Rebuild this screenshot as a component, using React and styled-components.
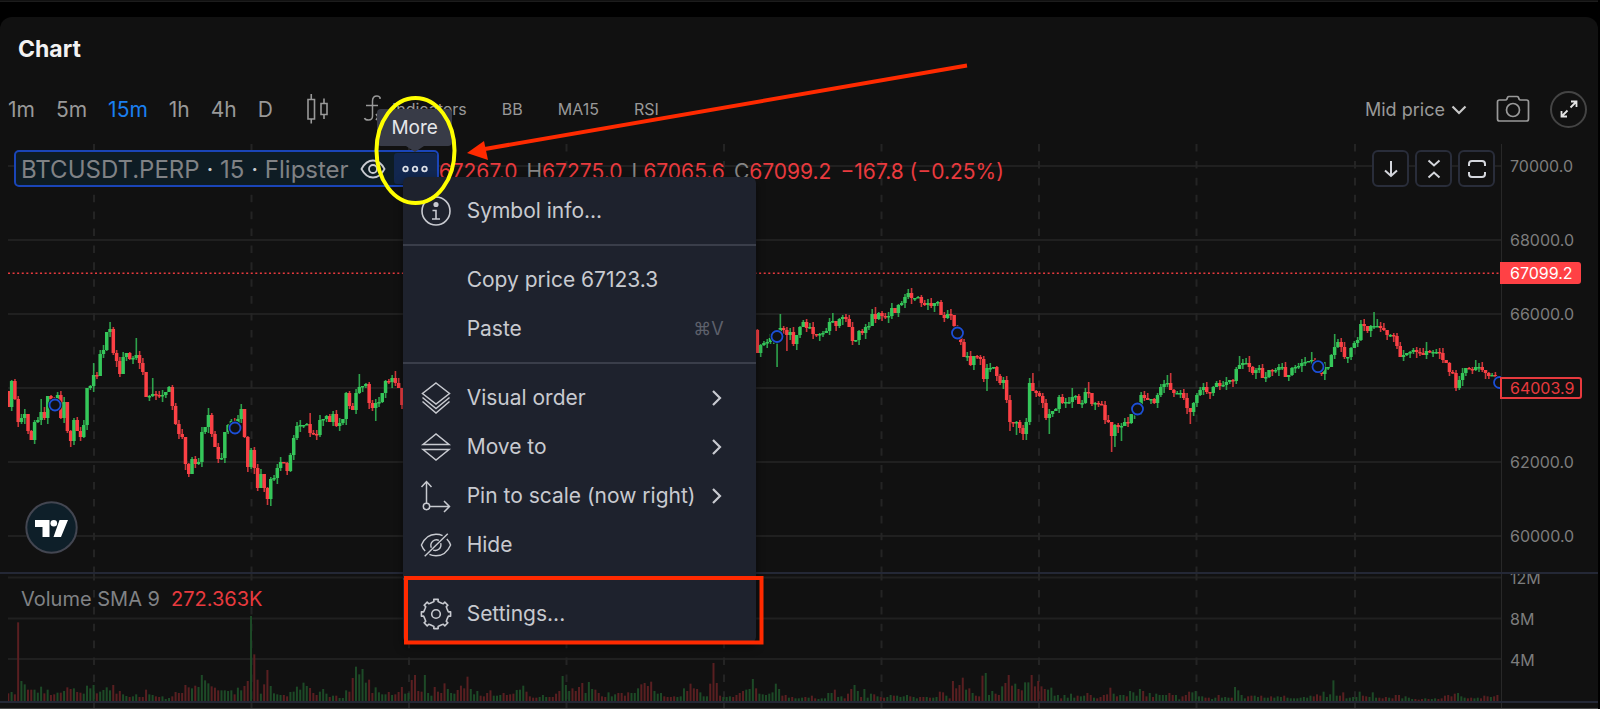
import React from "react";
import styled, { createGlobalStyle, css } from "styled-components";

const GlobalStyle = createGlobalStyle`
  * { box-sizing: border-box; }
  body {
    margin: 0;
    background: #000;
    color: #9a9a9a;
    font-family: Inter, "Liberation Sans", sans-serif;
    overflow-x: hidden;
  }
  button, select { font: inherit; color: inherit; background: none; border: 0; padding: 0; margin: 0; }
`;

const Page = styled.div`
  position: relative;
  display: flex;
  flex-direction: column;
  gap: 15px;
  padding-right: 2px;
`;

const PreviousCard = styled.div`
  height: 2px;
  background: #111;
  border-bottom: 1px solid #1c1c1c;
`;

const Card = styled.section`
  background: #111;
  border-radius: 12px 12px 0 0;
  border-bottom: 1px solid #4a4a4a;
`;

const Title = styled.h2`
  margin: 0;
  padding: 16px 18px 0;
  font-size: 23px;
  line-height: 32px;
  font-weight: 700;
  color: #f2f2f2;
`;

const Toolbar = styled.div`
  display: flex;
  align-items: center;
  justify-content: space-between;
  height: 38px;
  margin-top: 25px;
  padding: 0 11px 0 8px;
`;

const ToolGroup = styled.div`
  display: flex;
  align-items: center;
  gap: ${(p) => p.$gap}px;
`;

const IntervalButton = styled.button`
  padding-top: 2px;
  font-size: 21px;
  line-height: 24px;
  color: ${(p) => (p.$active ? "#1a7ff0" : "#999")};
`;

const IndicatorButton = styled.button`
  display: flex;
  align-items: center;
  gap: 10px;
  font-size: 16px;
  line-height: 24px;
  color: #999;
`;

const IconButton = styled.button`
  display: flex;
  align-items: center;
  justify-content: center;
  color: #999;
`;

const RoundButton = styled(IconButton)`
  width: 37px;
  height: 37px;
  border: 2px solid #444;
  border-radius: 50%;
  color: #e4e4e4;
`;

const PriceSource = styled.label`
  display: flex;
  align-items: center;
  gap: 6px;
  padding-top: 2px;
  font-size: 18px;
  line-height: 24px;
  color: #999;
  select { appearance: none; outline: none; }
  svg { color: #c8c8c8; }
`;

const ChartArea = styled.div`
  position: relative;
  margin-top: 16px;
`;

const Pane = styled.div`
  display: grid;
  grid-template-columns: minmax(0, 1fr) 97px;
  height: ${(p) => p.$height}px;
  padding-left: 8px;
  overflow: hidden;
  border-bottom: ${(p) => (p.$last ? 0 : 2)}px solid #242836;
`;

const Plot = styled.svg`
  display: block;
  width: 100%;
  height: 100%;
`;

const Axis = styled.div`
  position: relative;
  display: flex;
  flex-direction: column;
  align-items: flex-start;
  gap: ${(p) => p.$gap}px;
  padding-top: ${(p) => p.$top}px;
  border-left: 1px solid #282828;
  font-size: 16px;
  line-height: 24px;
  color: #7d7d7d;
`;

const VolumeScale = styled.div`
  display: flex;
  flex-direction: column;
  gap: 17px;
  margin-top: -8px;
`;

const AxisLabel = styled.span`
  padding-left: 8px;
  height: 24px;
`;

const tag = css`
  height: 22px;
  line-height: 18px;
  padding: 0 6px 0 8px;
  border: 2px solid #e83a3e;
  border-radius: 0 3px 3px 0;
  margin-left: -2px;
`;

const EntryTag = styled.span`
  ${tag}
  margin-top: 1px;
  margin-bottom: 1px;
  color: #e83a3e;
`;

const LastPriceTag = styled.span`
  ${tag}
  position: absolute;
  left: 0;
  top: 118px;
  background: #ff4145;
  border-color: #ff4145;
  color: #fff;
`;

const Legend = styled.div`
  position: absolute;
  left: 14px;
  top: 6px;
  display: flex;
  align-items: center;
`;

const SymbolBox = styled.div`
  display: flex;
  align-items: center;
  height: 37px;
  padding-left: 5px;
  border: 2px solid #1a45b8;
  border-radius: 5px;
  background: #0e1c24;
`;

const SymbolName = styled.span`
  padding-top: 2px;
  font-size: 24px;
  line-height: 32px;
  color: #808285;
  b { font-weight: 400; color: #c8ccd0; }
`;

const EyeButton = styled(IconButton)`
  width: 36px;
  margin-left: 6px;
  color: #c8cad0;
`;

const MoreAnchor = styled.div`
  position: relative;
  margin-left: 3px;
`;

const MoreButton = styled(IconButton)`
  width: 43px;
  height: 31px;
  border-radius: 3px;
  background: #12274f;
  color: #dcdfe6;
`;

const Tooltip = styled.div`
  position: absolute;
  z-index: 2;
  left: 50%;
  bottom: 38px;
  width: 75px;
  height: 37px;
  margin-left: -38px;
  border-radius: 4px;
  background: #383b47;
  color: #e6e7ea;
  font-size: 19px;
  line-height: 38px;
  text-align: center;
  &::after {
    content: "";
    position: absolute;
    left: 29px;
    top: 37px;
    border: 9px solid transparent;
    border-top: 6px solid #383b47;
    border-bottom: 0;
  }
`;

const Menu = styled.div`
  position: absolute;
  z-index: 1;
  left: 9px;
  top: 24px;
  width: 353px;
  padding: 9px 0 5px;
  border-radius: 6px;
  background: #1e222d;
  box-shadow: 0 4px 8px rgba(0, 0, 0, 0.5);
  color: #c8cad0;
`;

const MenuItem = styled.button`
  display: grid;
  grid-template-columns: 32px 1fr auto;
  align-items: center;
  column-gap: 15px;
  width: 100%;
  height: 49px;
  padding: 0 32px 0 17px;
  font-size: 21px;
  line-height: 28px;
  text-align: left;
  white-space: nowrap;
`;

const MenuIcon = styled.span`
  display: flex;
  justify-content: center;
`;

const Shortcut = styled.kbd`
  font: 18px/24px Inter, "DejaVu Sans", sans-serif;
  color: #5d606b;
`;

const MenuRule = styled.hr`
  height: 2px;
  margin: 9px 0;
  border: 0;
  background: #3a3e4a;
`;

const Ohlc = styled.div`
  display: flex;
  gap: 9px;
  padding-top: 6px;
  font-size: 21px;
  line-height: 24px;
  color: #e83a3e;
  white-space: nowrap;
  i { font-style: normal; color: #858585; }
`;

const PaneActions = styled.div`
  position: absolute;
  right: 103px;
  top: 6px;
  display: flex;
  gap: 6px;
`;

const PaneButton = styled(IconButton)`
  width: 37px;
  height: 37px;
  border: 2px solid #292d3a;
  border-radius: 6px;
  background: #111;
  color: #d4d6dc;
`;

const VolumeLegend = styled.div`
  position: absolute;
  left: 21px;
  top: 441px;
  display: flex;
  gap: 11px;
  font-size: 20px;
  line-height: 28px;
  color: #808285;
  strong { font-weight: 400; color: #e83a3e; }
`;

const LogoLink = styled.a`
  position: absolute;
  left: 25px;
  top: 357px;
  width: 53px;
  height: 53px;
`;

const Annotations = styled.svg`
  position: absolute;
  z-index: 5;
  left: 0;
  top: 0;
  pointer-events: none;
`;

const Stroke = ({ w, h, box, sw = 1, children }) => (
  <svg width={w} height={h} viewBox={box || `0 0 ${w} ${h}`} fill="none" stroke="currentColor" strokeWidth={sw} aria-hidden="true">
    {children}
  </svg>
);

const CandlesIcon = () => (
  <Stroke w={24} h={32} sw={1.6}>
    <path d="M2 6.500h6.500v19.500H2zM5.250 1v5.500M5.250 26v4.500M15 10.500h6v11h-6zM18 5.500v5M18 21.500v4.500" />
  </Stroke>
);
const FxIcon = () => (
  <Stroke w={19} h={30} sw={1.5}>
    <path d="M17 5V3.500Q16 2 14 2Q9.500 2 9.500 7V22Q9.500 26 5.500 26Q2 26 1.500 24M3 11.500H15M13 20l4 6M17 20l-4 6" />
  </Stroke>
);
const ChevronDown = () => (
  <Stroke w={16} h={10} sw={2.2}><path d="M1.500 1.500L8 8L14.500 1.500" /></Stroke>
);
const CameraIcon = () => (
  <Stroke w={34} h={28} sw={1.7}>
    <path d="M3.500 5H9.500Q10.500 5 11 4L11.500 2.500Q12 1.500 13 1.500H21Q22 1.500 22.500 2.500L23 4Q23.500 5 24.500 5H30.500Q32.500 5 32.500 7V24Q32.500 26 30.500 26H3.500Q1.500 26 1.500 24V7Q1.500 5 3.500 5Z" />
    <circle cx="17" cy="15" r="6.500" />
  </Stroke>
);
const ExpandIcon = () => (
  <Stroke w={18} h={18} sw={1.8}>
    <path d="M10.500 7.500L16.500 1.500M11 1.500H16.500V7M7.500 10.500L1.500 16.500M1.500 11V16.500H7" />
  </Stroke>
);
const EyeIcon = () => (
  <Stroke w={26} h={20} sw={1.8}>
    <path d="M1.500 10Q6 1.500 13 1.500T24.500 10Q20 18.500 13 18.500T1.500 10Z" />
    <circle cx="13" cy="10" r="4" />
  </Stroke>
);
const DotsIcon = () => (
  <Stroke w={26} h={8} sw={1.8}>
    <circle cx="3.500" cy="4" r="2.300" /><circle cx="13" cy="4" r="2.300" /><circle cx="22.500" cy="4" r="2.300" />
  </Stroke>
);
const InfoIcon = () => (
  <Stroke w={32} h={32} sw={1.6}>
    <circle cx="16" cy="16" r="14" />
    <circle cx="16" cy="9.500" r="1.800" fill="currentColor" />
    <path d="M12.500 15.500H16V24M12 24H20" />
  </Stroke>
);
const LayersIcon = () => (
  <Stroke w={32} h={34} sw={1.5}>
    <path d="M16 2L29.500 12.500L16 23L2.500 12.500ZM2.500 16.500L16 27.500L29.500 16.500M2.500 20.500L16 32L29.500 20.500" />
  </Stroke>
);
const MoveIcon = () => (
  <Stroke w={32} h={32} sw={1.5}>
    <path d="M3 13.500L16 3L29 13.500ZM3 18.500L16 29L29 18.500Z" />
  </Stroke>
);
const PinIcon = () => (
  <Stroke w={32} h={34} sw={1.5}>
    <path d="M6.500 24V2.500M1.500 8L6.500 2.500L11.500 8M10 27.500H29M24 22L29.500 27.500L24 33" />
    <circle cx="6.500" cy="27.500" r="3.200" />
  </Stroke>
);
const HideIcon = () => (
  <Stroke w={34} h={28} sw={1.5}>
    <path d="M5.500 20.500Q3 18 1.500 14Q6.500 2.500 17 2.500Q21 2.500 24 4M28.500 7.500Q31.500 10.500 32.500 14Q27.500 25.500 17 25.500Q13 25.500 10 24M12 17Q10.500 12.500 13.500 10Q16.500 7.500 20 9M22 12Q23 16 20 18.500Q17.500 20.500 14 19.500M29.500 2L5 26" />
  </Stroke>
);
const gearPath = (() => {
  const pts = [];
  for (let k = 0; k < 8; k++) {
    const base = (k * Math.PI) / 4;
    [[-0.3, 12.2], [-0.17, 12.6], [-0.15, 14.8], [0.15, 14.8], [0.17, 12.6], [0.3, 12.2]].forEach(([a, r]) =>
      pts.push(`${(16 + r * Math.sin(base + a)).toFixed(1)} ${(16 - r * Math.cos(base + a)).toFixed(1)}`));
  }
  return `M${pts.join("L")}Z`;
})();
const GearIcon = () => (
  <Stroke w={32} h={32} sw={1.6}>
    <path d={gearPath} strokeLinejoin="round" /><circle cx="16" cy="16" r="4.300" />
  </Stroke>
);
const ChevronRight = () => (
  <Stroke w={14} h={18} sw={2.2}><path d="M3 2L10 9L3 16" /></Stroke>
);

/* Closing levels of successive candles, in plot units. */
const EARLY = [407,381,399,422,418,414,431,440,422,420,412,418,396,399,400,395,418,402,431,441,420,431,437,425,388,386,375,376,354,350,332,329,353,361,374,357,353,359,358,355,363,372,397,396,394,395,396,395,392,387,406,424,434,437,464,474,459,464,462,432,427,415,434,447,459,458,432,425,421,423,419,409,437,467,450,468,488,474,488,499,479,478,468,462,463,471,455,438,426,425,425,424,433,434,435,420,419,416,422,414,426,423,419,393,406,410,393,387,386,384,403,408,403,402,393,381,382,378,383,388,405];
const LATE = [353,345,343,342,338,337,336,328,330,335,332,344,335,327,322,328,327,334,335,334,333,331,322,321,326,319,317,319,327,341,340,331,333,327,326,314,319,313,316,317,316,308,313,305,303,297,293,298,298,297,303,305,303,306,303,302,315,318,314,315,326,333,342,357,356,365,356,357,359,379,368,368,367,376,383,380,400,422,423,422,428,434,422,383,391,393,396,403,418,414,411,409,397,403,402,402,397,396,404,403,392,393,404,403,404,405,420,422,436,425,427,426,422,423,414,410,409,395,398,400,399,403,395,387,384,383,390,393,393,393,398,408,412,403,395,390,387,392,393,387,383,386,385,382,380,381,369,365,363,363,367,373,370,368,378,377,370,371,370,367,367,377,375,368,367,366,363,362,361,360,364,367,374,367,367,355,347,342,347,357,357,348,343,340,324,326,331,326,326,326,328,330,335,335,336,346,357,355,353,352,350,352,353,355,351,352,352,352,353,360,363,372,373,388,380,373,368,369,370,367,367,370,373,376,375,376];
const EARLY_WICKS = { 26: [363], 31: [322], 39: [338], 44: [378], 55: [, 477], 61: [408], 79: [, 505], 80: [, 506], 107: [374], 112: [, 421], 118: [371], 20: [, 445], 10: [399], 92: [413] };
const LATE_WICKS = { 0: [329], 6: [, 367], 7: [314], 9: [, 351], 23: [313], 36: [307], 46: [289], 70: [, 391], 77: [, 431], 79: [, 435], 81: [, 440], 84: [373], 89: [, 434], 96: [388], 101: [382], 108: [, 452], 109: [, 447], 111: [, 441], 125: [375], 126: [373], 132: [, 424], 133: [, 416], 147: [356], 150: [356], 169: [352], 176: [334], 188: [312], 189: [319], 204: [342], 213: [, 391], 219: [360] };
const STEP = 3.28;

const makeCandles = (closes, wicks, x0, firstOpen) =>
  closes.map((close, i) => {
    const open = i ? closes[i - 1] : firstOpen;
    const [hi, lo] = wicks[i] || [];
    return {
      x: x0 + i * STEP,
      up: close <= open,
      top: Math.min(open, close),
      bottom: Math.max(open, close),
      high: hi || Math.min(open, close) - ((i * 7) % 6),
      low: lo || Math.max(open, close) + ((i * 11) % 7),
    };
  });
const CANDLES = [...makeCandles(EARLY, EARLY_WICKS, 8.3, 391), ...makeCandles(LATE, LATE_WICKS, 757.3, 330)];

/* Volume bar heights, one for each candle step; three units make a pixel. */
const VOLUMES = [23,27,20,236,60,50,34,34,34,25,43,23,34,18,20,25,25,30,41,36,38,27,25,22,46,38,48,23,28,33,41,32,48,22,30,20,15,12,14,20,12,12,34,20,18,14,12,14,6,9,14,27,24,24,48,41,38,46,42,78,62,53,44,40,32,32,32,30,32,20,40,32,45,60,255,140,64,22,50,93,45,23,20,18,18,14,27,28,43,34,55,45,39,24,18,28,36,22,12,16,16,9,9,32,28,69,103,80,96,55,64,24,41,26,20,20,27,18,20,27,
42,22,24,63,78,30,28,78,24,16,42,28,24,53,36,24,22,33,46,38,73,36,20,30,16,14,24,32,16,16,18,24,18,20,22,33,34,46,28,14,10,10,12,18,12,12,12,22,30,75,48,30,38,30,42,54,24,57,36,34,24,14,12,26,14,20,24,24,16,26,24,24,38,50,54,45,58,30,22,24,14,12,12,14,12,14,38,30,52,38,36,26,14,14,52,114,54,16,12,12,14,12,18,24,30,34,36,66,38,
22,20,18,22,26,52,36,16,18,10,12,8,8,10,12,10,16,8,6,8,8,24,24,34,12,14,8,22,36,48,30,12,36,10,22,20,14,12,10,12,18,16,16,12,14,18,14,12,8,12,12,12,10,10,12,28,26,16,8,60,38,48,70,34,38,24,16,14,76,84,18,30,22,18,44,54,78,46,52,36,32,56,56,78,44,60,44,36,34,40,16,18,8,18,10,22,10,16,14,16,24,18,10,8,12,18,20,40,22,14,18,18,14,30,26,16,36,30,14,24,12,22,18,18,18,24,18,18,
5,14,18,28,26,30,14,14,10,10,6,10,18,10,12,10,10,42,32,18,8,14,16,16,12,16,10,10,14,10,14,12,16,10,8,8,8,10,12,10,16,14,20,16,28,12,20,62,16,16,26,8,10,12,12,28,16,14,12,26,10,10,8,12,10,8,18,18,8,14,10,6,6,4,6,8,6,6,8,6,8,16,18,14,22,24,14,10,8,10,8,10,8,16,14,12,14,18];
const volumeUp = (i) => {
  if (i < EARLY.length) return i > 0 && EARLY[i] <= EARLY[i - 1];
  const n = i - 228;
  if (n > 0 && n < LATE.length) return LATE[n] <= LATE[n - 1];
  return (i * 13) % 7 > 3;
};

const DAYS = [94, 251.5, 409, 566.5, 724, 881.5, 1039, 1196.5, 1355];
const DayLines = ({ from, to }) => DAYS.map((x) => (
  <line key={x} x1={x} x2={x} y1={from} y2={to} stroke="#242424" strokeWidth="2" strokeDasharray="7.6 9.3" />
));
const LevelLines = ({ levels }) => levels.map((y) => (
  <line key={y} x1="8" x2="1501" y1={y} y2={y} stroke="#202020" strokeWidth="2" />
));
const MARKERS = [[55, 405], [235, 428], [777, 336.5], [957.5, 333], [1137.5, 409], [1318, 366.7], [1499.5, 382.5]];

const PricePlot = () => (
  <Plot viewBox="8 144 1493 428" preserveAspectRatio="none" role="img" aria-label="BTCUSDT.PERP price">
    <LevelLines levels={[166, 240, 314, 388, 462, 536]} />
    <DayLines from={144} to={572} />
    {CANDLES.map((c) => (
      <g key={c.x} fill={c.up ? "#35c75a" : "#fb4045"}>
        <rect x={c.x - 0.7} width="1.6" y={c.high} height={c.low - c.high} opacity="0.8" />
        <rect x={c.x - 1.7} width="3.5" y={c.top} height={Math.max(1.5, c.bottom - c.top)} />
      </g>
    ))}
    <line x1="8" x2="1501" y1="273.300" y2="273.300" stroke="#e83a3e" strokeWidth="1.6" strokeDasharray="2 2.580" />
    {MARKERS.map(([x, y]) => (
      <g key={x}>
        <circle cx={x} cy={y} r="7.200" fill="#111" />
        <circle cx={x} cy={y} r="5.500" fill="none" stroke="#1c4fd6" strokeWidth="1.800" />
      </g>
    ))}
  </Plot>
);

const VolumePlot = () => (
  <Plot viewBox="8 574 1493 127" preserveAspectRatio="none" role="img" aria-label="Volume">
    <LevelLines levels={[577.5, 618.5, 659]} />
    <DayLines from={573} to={701} />
    {VOLUMES.map((v, i) => (
      <rect key={i} x={7.3 + i * STEP} width="2" y={701 - v / 3} height={v / 3} fill={volumeUp(i) ? "#1d4a27" : "#591f21"} />
    ))}
  </Plot>
);

const Item = ({ icon, label, submenu, shortcut }) => (
  <MenuItem role="menuitem">
    <MenuIcon>{icon}</MenuIcon>
    <span>{label}</span>
    {submenu && <ChevronRight />}
    {shortcut && <Shortcut>{shortcut}</Shortcut>}
  </MenuItem>
);

export default function App() {
  return (
    <Page>
      <GlobalStyle />
      <PreviousCard />
      <Card>
        <Title>Chart</Title>
        <Toolbar>
          <ToolGroup $gap={33}>
            <ToolGroup $gap={21}>
              {["1m", "5m", "15m", "1h", "4h", "D"].map((t) => (
                <IntervalButton key={t} $active={t === "15m"}>{t}</IntervalButton>
              ))}
            </ToolGroup>
            <IconButton aria-label="Chart type"><CandlesIcon /></IconButton>
            <ToolGroup $gap={35}>
              <IndicatorButton><FxIcon />Indicators</IndicatorButton>
              <IndicatorButton>BB</IndicatorButton>
              <IndicatorButton>MA15</IndicatorButton>
              <IndicatorButton>RSI</IndicatorButton>
            </ToolGroup>
          </ToolGroup>
          <ToolGroup $gap={20}>
            <ToolGroup $gap={29}>
              <PriceSource>
                <select aria-label="Price source"><option>Mid price</option></select>
                <ChevronDown />
              </PriceSource>
              <IconButton aria-label="Snapshot"><CameraIcon /></IconButton>
            </ToolGroup>
            <RoundButton aria-label="Full screen"><ExpandIcon /></RoundButton>
          </ToolGroup>
        </Toolbar>

        <ChartArea>
          <Pane $height={430}>
            <PricePlot />
            <Axis $gap={50} $top={10}>
              <AxisLabel>70000.0</AxisLabel>
              <AxisLabel>68000.0</AxisLabel>
              <AxisLabel>66000.0</AxisLabel>
              <EntryTag>64003.9</EntryTag>
              <AxisLabel>62000.0</AxisLabel>
              <AxisLabel>60000.0</AxisLabel>
              <LastPriceTag>67099.2</LastPriceTag>
            </Axis>
          </Pane>
          <Pane $height={129}>
            <VolumePlot />
            <Axis $gap={17} $top={0}>
              <VolumeScale>
                <AxisLabel>12M</AxisLabel>
                <AxisLabel>8M</AxisLabel>
                <AxisLabel>4M</AxisLabel>
              </VolumeScale>
            </Axis>
          </Pane>
          <Pane $height={5} $last>
            <Plot viewBox="8 703 1493 5" preserveAspectRatio="none" aria-hidden="true">
              <DayLines from={703} to={708} />
            </Plot>
            <Axis $gap={0} $top={0} />
          </Pane>

          <LogoLink href="#tradingview" aria-label="TradingView">
            <svg width="53" height="53" viewBox="0 0 53 53">
              <circle cx="26.500" cy="26.500" r="25.200" fill="#0e1f29" stroke="#434651" strokeWidth="2" />
              <g fill="#fff">
                <path d="M10 19H24.500V36H17.500V26H10ZM34.500 19H43L36 36H28.500Z" />
                <circle cx="28.800" cy="22.300" r="3.300" />
              </g>
            </svg>
          </LogoLink>
          <VolumeLegend><span>Volume SMA 9</span><strong>272.363K</strong></VolumeLegend>

          <PaneActions>
            <PaneButton aria-label="Move pane down">
              <Stroke w={18} h={20} sw={2}><path d="M9 2V17M3 11.500L9 17L15 11.500" /></Stroke>
            </PaneButton>
            <PaneButton aria-label="Collapse pane">
              <Stroke w={18} h={22} sw={2}><path d="M3.500 2.500L9 7.500L14.500 2.500M3.500 19.500L9 14.500L14.500 19.500" /></Stroke>
            </PaneButton>
            <PaneButton aria-label="Maximize pane">
              <Stroke w={20} h={20} sw={2}>
                <path d="M2 7V5Q2 2 5 2H15Q18 2 18 5V7M2 13V15Q2 18 5 18H15Q18 18 18 15V13" />
              </Stroke>
            </PaneButton>
          </PaneActions>

          <Legend>
            <SymbolBox>
              <SymbolName>BTCUSDT.PERP <b>·</b> 15 <b>·</b> Flipster</SymbolName>
              <EyeButton aria-label="Hide symbol"><EyeIcon /></EyeButton>
              <MoreAnchor>
                <MoreButton aria-label="More" aria-haspopup="menu"><DotsIcon /></MoreButton>
                <Tooltip role="tooltip">More</Tooltip>
                <Menu role="menu">
                  <Item icon={<InfoIcon />} label="Symbol info..." />
                  <MenuRule />
                  <Item label="Copy price 67123.3" />
                  <Item label="Paste" shortcut="⌘V" />
                  <MenuRule />
                  <Item icon={<LayersIcon />} label="Visual order" submenu />
                  <Item icon={<MoveIcon />} label="Move to" submenu />
                  <Item icon={<PinIcon />} label="Pin to scale (now right)" submenu />
                  <Item icon={<HideIcon />} label="Hide" />
                  <MenuRule />
                  <Item icon={<GearIcon />} label="Settings..." />
                </Menu>
              </MoreAnchor>
            </SymbolBox>
            <Ohlc>
              <span>67267.0</span>
              <span><i>H</i>67275.0</span>
              <span><i>L</i>67065.6</span>
              <span><i>C</i>67099.2</span>
              <span>−167.8 (−0.25%)</span>
            </Ohlc>
          </Legend>
        </ChartArea>
      </Card>

      <Annotations width="1000" height="700" aria-hidden="true">
        <ellipse cx="415.500" cy="150.500" rx="39" ry="52.500" fill="none" stroke="#ffff00" strokeWidth="4" />
        <path d="M967 65.500L482 149.500" stroke="#ff2a00" strokeWidth="4" />
        <path d="M467 153L484 141L488 160Z" fill="#ff2a00" />
        <rect x="406" y="578" width="355.500" height="64.500" fill="none" stroke="#ff2a00" strokeWidth="4" />
      </Annotations>
    </Page>
  );
}
